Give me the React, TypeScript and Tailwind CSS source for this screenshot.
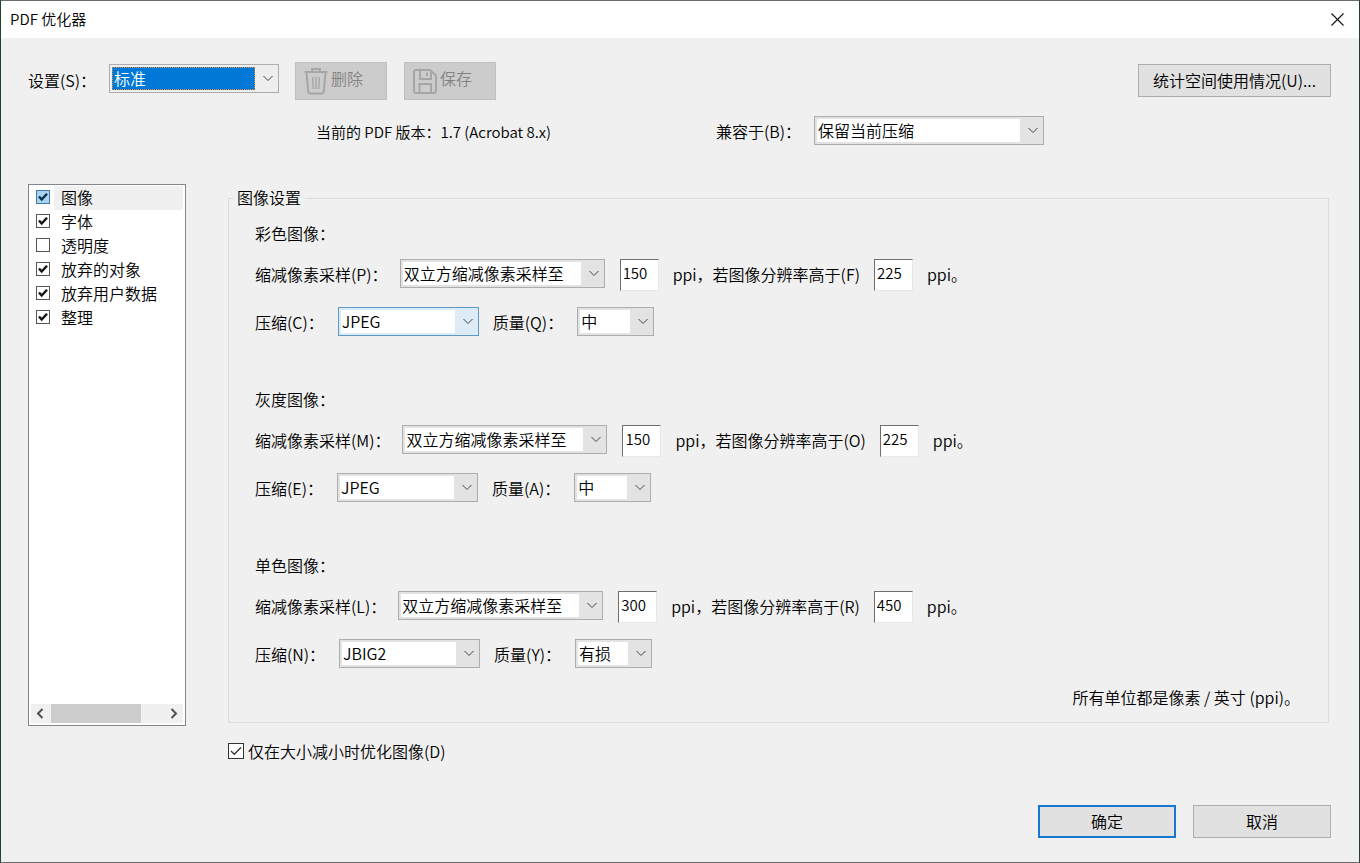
import { useId, useState } from 'react';
import clsx from 'clsx';

interface ImageGroup {
  title: string;
  keys: string[];
  target: string;
  threshold: string;
  compression: string;
  quality: string;
  active?: boolean;
}

const groups: ImageGroup[] = [
  { title: '彩色图像：', keys: ['P', 'F', 'C', 'Q'], target: '150', threshold: '225', compression: 'JPEG', quality: '中', active: true },
  { title: '灰度图像：', keys: ['M', 'O', 'E', 'A'], target: '150', threshold: '225', compression: 'JPEG', quality: '中' },
  { title: '单色图像：', keys: ['L', 'R', 'N', 'Y'], target: '300', threshold: '450', compression: 'JBIG2', quality: '有损' },
];

const panels = [
  { name: '图像', on: true },
  { name: '字体', on: true },
  { name: '透明度', on: false },
  { name: '放弃的对象', on: true },
  { name: '放弃用户数据', on: true },
  { name: '整理', on: true },
];

interface ComboProps {
  id: string;
  value: string;
  className: string;
  active?: boolean;
  highlighted?: boolean;
}

const Combo: React.FC<ComboProps> = ({ id, value, className, active, highlighted }) => (
  <div
    className={clsx(
      'relative h-[29px] shrink-0 border py-[2px] pl-[2px] pr-[23px]',
      active && 'border-[#5b9ac8] bg-[#dcebf5]',
      highlighted && 'border-[#adadad] bg-[#eeeeee]',
      !active && !highlighted && 'border-[#adadad] bg-[#e3e3e3]',
      className
    )}
  >
    <select
      id={id}
      defaultValue={value}
      className={clsx(
        'block h-[23px] w-full appearance-none rounded-none pb-[2px] outline-none',
        highlighted
          ? 'border border-dotted border-[#d98b3a] bg-[#0078d7] pl-px leading-[18px] text-white'
          : 'bg-white pl-px leading-[20px]'
      )}
    >
      <option>{value}</option>
    </select>
    <svg className="pointer-events-none absolute right-[5px] top-[10px]" width="10" height="7" viewBox="0 0 10 7" fill="none" stroke="#444">
      <path d="M0.5 1L5 5.5L9.5 1" />
    </svg>
  </div>
);

const PpiInput: React.FC<{ label: string; value: string }> = ({ label, value }) => (
  <input
    aria-label={label}
    defaultValue={value}
    className="h-8 w-[39px] shrink-0 border border-b-[#e8e8e8] border-l-[#6e6e6e] border-r-[#e8e8e8] border-t-[#6e6e6e] bg-white pb-[6px] pl-[2px] text-[15px] outline-none"
  />
);

const ImageSettings: React.FC<{ group: ImageGroup }> = ({ group }) => {
  const id = useId();
  const [k1, k2, k3, k4] = group.keys;

  return (
    <div>
      <h3 className="mb-[13px] h-6 leading-[22px]">{group.title}</h3>
      <div className="mb-4 flex h-8 items-start whitespace-nowrap leading-[30px]">
        <label htmlFor={`${id}-method`} className="mr-3">缩减像素采样({k1})：</label>
        <Combo id={`${id}-method`} value="双立方缩减像素采样至" className="w-[205px]" />
        <div className="ml-[15px] flex gap-[14px]">
          <PpiInput label="ppi" value={group.target} />
          <span>ppi，若图像分辨率高于({k2})</span>
          <PpiInput label="若图像分辨率高于" value={group.threshold} />
          <span>ppi。</span>
        </div>
      </div>
      <div className="flex h-8 items-start whitespace-nowrap leading-[30px]">
        <label htmlFor={`${id}-compression`} className="mr-[14px]">压缩({k3})：</label>
        <Combo id={`${id}-compression`} value={group.compression} active={group.active} className="w-[141px]" />
        <label htmlFor={`${id}-quality`} className="mx-[14px]">质量({k4})：</label>
        <Combo id={`${id}-quality`} value={group.quality} className="w-[77px]" />
      </div>
    </div>
  );
};

const PanelList: React.FC = () => {
  const [items, setItems] = useState(panels);

  const toggle = (index: number) => {
    setItems(items.map((item, i) => (i === index ? { ...item, on: !item.on } : item)));
  };

  return (
    <div className="flex h-[542px] w-[158px] shrink-0 flex-col justify-between border border-[#82858c] bg-white p-[2px] pt-px">
      <ul>
        {items.map((item, i) => (
          <li key={item.name}>
            <label className="flex h-6 items-center pl-[5px]">
              <span className="relative mb-[2px] mr-1 block size-[14px] shrink-0">
                <input
                  type="checkbox"
                  checked={item.on}
                  onChange={() => toggle(i)}
                  className={clsx(
                    'block size-[14px] appearance-none border',
                    i === 0 ? 'border-[#3e7ba8] bg-[#a9d3f0]' : 'border-[#555] bg-white'
                  )}
                />
                {item.on && (
                  <svg className="pointer-events-none absolute left-0 top-0" width="14" height="14" viewBox="0 0 14 14" fill="none" stroke={i === 0 ? '#0b2f4d' : '#111'} strokeWidth="2.4">
                    <path d="M3 6.5L5.7 9.5L11 3.8" />
                  </svg>
                )}
              </span>
              <span className={clsx('h-6 flex-1 pl-[7px] leading-[22px]', i === 0 && 'bg-[#f0f0f0]')}>{item.name}</span>
            </label>
          </li>
        ))}
      </ul>
      <div className="flex h-[19px] items-center bg-[#f0f0f0]">
        <button aria-label="向左滚动" className="flex h-full w-5 items-center justify-start pl-[5px]">
          <svg width="8" height="11" viewBox="0 0 8 11" fill="none" stroke="#505050" strokeWidth="2">
            <path d="M6.5 1L2 5.5L6.5 10" />
          </svg>
        </button>
        <div className="h-full flex-1">
          <div className="h-full w-[90px] bg-[#cdcdcd]" />
        </div>
        <button aria-label="向右滚动" className="flex h-full w-5 items-center justify-end pr-[5px]">
          <svg width="8" height="11" viewBox="0 0 8 11" fill="none" stroke="#505050" strokeWidth="2">
            <path d="M1.5 1L6 5.5L1.5 10" />
          </svg>
        </button>
      </div>
    </div>
  );
};

const TrashIcon = () => (
  <svg width="24" height="28" viewBox="0 0 24 28" fill="none" stroke="#a6a6a6" strokeWidth="2">
    <path d="M0.5 5H23.5M8 5V2H16V5" />
    <path d="M2.5 5L4.2 24.5Q4.4 26.5 6.4 26.5H17.6Q19.6 26.5 19.8 24.5L21.5 5" />
    <path d="M8.6 10L9.2 22M12 10V22M15.4 10L14.8 22" strokeWidth="1.4" />
  </svg>
);

const SaveIcon = () => (
  <svg width="24" height="25" viewBox="0 0 24 25" fill="none" stroke="#a6a6a6" strokeWidth="2">
    <path d="M3 1H17L23 6.5V22Q23 24 21 24H3Q1 24 1 22V3Q1 1 3 1Z" />
    <path d="M7 1V10H18V3M14 3.5V7" />
    <path d="M6.5 24V15H18V24" />
  </svg>
);

const App: React.FC = () => {
  const [onlyIfSmaller, setOnlyIfSmaller] = useState(true);

  return (
    <div className="flex min-h-screen flex-col border border-x-[#22402a] border-y-[#6b6b6b] bg-[#f0f0f0] font-['Noto_Sans_CJK_SC',sans-serif] text-base font-[350] text-black">
      <header className="flex h-[37px] items-center justify-between bg-white pl-[9px] pr-[15px]">
        <h1 className="text-[15px]">PDF 优化器</h1>
        <button aria-label="关闭">
          <svg width="13" height="13" viewBox="0 0 13 13" fill="none" stroke="#111" strokeWidth="1.1">
            <path d="M0.5 0.5L12.5 12.5M12.5 0.5L0.5 12.5" />
          </svg>
        </button>
      </header>

      <main className="flex flex-1 flex-col pb-6 pl-[27px] pr-7 pt-6">
        <div className="flex items-start">
          <label htmlFor="preset" className="w-[81px] leading-9">设置(S)：</label>
          <div className="flex gap-4">
            <div className="pt-[2px]">
              <Combo id="preset" value="标准" highlighted className="w-[170px]" />
            </div>
            <div className="flex gap-[17px]">
              <button disabled className="flex h-[38px] w-[92px] items-center border border-[#bfbfbf] bg-[#cccccc] pl-2 text-[#838383]">
                <TrashIcon />
                <span className="ml-[3px] pb-[7px]">删除</span>
              </button>
              <button disabled className="flex h-[38px] w-[92px] items-center border border-[#bfbfbf] bg-[#cccccc] pl-2 text-[#838383]">
                <SaveIcon />
                <span className="ml-[3px] pb-[7px]">保存</span>
              </button>
            </div>
          </div>
          <button className="ml-auto mt-[2px] h-[33px] w-[193px] border border-[#adadad] bg-[#e1e1e1] pb-[2px]">
            统计空间使用情况(U)...
          </button>
        </div>

        <div className="mt-4 flex items-start leading-[30px]">
          <p className="ml-[288px] w-[400px] text-[15px] leading-8">当前的 PDF 版本：1.7 (Acrobat 8.x)</p>
          <label htmlFor="compat" className="w-[98px]">兼容于(B)：</label>
          <Combo id="compat" value="保留当前压缩" className="w-[230px]" />
        </div>

        <div className="mt-9 flex gap-[42px]">
          <PanelList />
          <div className="flex flex-1 flex-col pr-[2px] pt-[2px]">
            <fieldset className="border border-[#dcdcdc] pb-3 pl-[26px] pr-7">
              <legend className="-ml-[22px] h-6 px-1 leading-[22px]">图像设置</legend>
              <div className="flex flex-col gap-[49px] pt-3">
                {groups.map((group) => (
                  <ImageSettings key={group.title} group={group} />
                ))}
              </div>
              <p className="mt-[15px] h-6 text-right leading-[22px]">所有单位都是像素 / 英寸 (ppi)。</p>
            </fieldset>
            <label className="mt-4 flex items-center self-start leading-6">
              <span className="relative mr-1 block size-4 shrink-0">
                <input
                  type="checkbox"
                  checked={onlyIfSmaller}
                  onChange={(e) => setOnlyIfSmaller(e.target.checked)}
                  className="block size-4 appearance-none border border-[#333] bg-white"
                />
                {onlyIfSmaller && (
                  <svg className="pointer-events-none absolute left-0 top-0" width="16" height="16" viewBox="0 0 16 16" fill="none" stroke="#333" strokeWidth="1.3">
                    <path d="M3 8L6.3 11.3L13 4.5" />
                  </svg>
                )}
              </span>
              仅在大小减小时优化图像(D)
            </label>
          </div>
        </div>

        <div className="mt-auto flex justify-end gap-[17px]">
          <button className="h-[33px] w-[138px] border-2 border-[#1478d0] bg-[#e1e1e1] pb-[2px]">确定</button>
          <button className="h-[33px] w-[138px] border border-[#adadad] bg-[#e1e1e1] pb-[2px]">取消</button>
        </div>
      </main>
    </div>
  );
};

export default App;
